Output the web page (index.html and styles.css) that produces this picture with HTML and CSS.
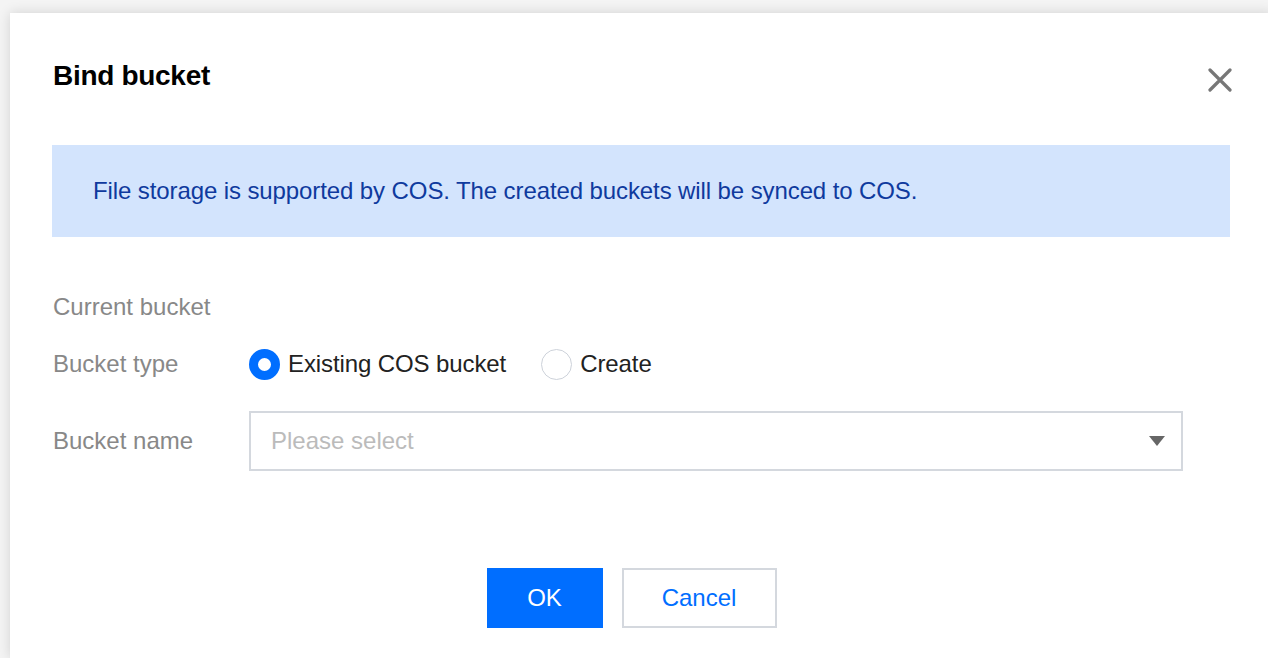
FILE: index.html
```html
<!DOCTYPE html>
<html lang="en">
<head>
<meta charset="utf-8">
<title>Bind bucket</title>
<link rel="stylesheet" href="styles.css">
</head>
<body>
  <div class="dialog">
    <div class="dialog-header">
      <h2 class="dialog-title">Bind bucket</h2>
      <button class="close-btn" aria-label="Close">
        <svg width="24" height="24" viewBox="0 0 24 24">
          <path d="M2 2 L22 22 M22 2 L2 22" stroke="#777" stroke-width="3.2" stroke-linecap="round" fill="none"/>
        </svg>
      </button>
    </div>

    <div class="alert">File storage is supported by COS. The created buckets will be synced to COS.</div>

    <div class="form">
      <div class="form-row row-current">
        <div class="form-label">Current bucket</div>
        <div class="form-control"></div>
      </div>
      <div class="form-row row-type">
        <div class="form-label">Bucket type</div>
        <div class="form-control radios">
          <label class="radio checked"><span class="radio-dot"></span><span class="radio-text">Existing COS bucket</span></label>
          <label class="radio"><span class="radio-dot"></span><span class="radio-text">Create</span></label>
        </div>
      </div>
      <div class="form-row row-name">
        <div class="form-label">Bucket name</div>
        <div class="form-control">
          <div class="select">
            <span class="placeholder">Please select</span>
            <span class="caret"></span>
          </div>
        </div>
      </div>
    </div>

    <div class="footer">
      <button class="btn btn-primary">OK</button>
      <button class="btn btn-weak">Cancel</button>
    </div>
  </div>
</body>
</html>
```

FILE: styles.css
```css
html, body {
  margin: 0;
  padding: 0;
}

body {
  background: #f4f4f4;
  font-family: "Liberation Sans", Arial, Helvetica, sans-serif;
  overflow: hidden;
  height: 658px;
}

.dialog {
  margin: 13px 0 0 10px;
  width: 1263px;
  height: 645px;
  box-sizing: border-box;
  background: #fff;
  box-shadow: 0 0 12px rgba(0, 0, 0, 0.14);
  padding: 43px 43px 0 42px;
}

.dialog-header {
  display: flex;
  align-items: center;
  justify-content: space-between;
  height: 40px;
}

.dialog-title {
  margin: 0 0 0 1px;
  font-size: 28px;
  font-weight: bold;
  color: #000;
  line-height: 40px;
  letter-spacing: -0.3px;
}

.close-btn {
  border: 0;
  background: none;
  padding: 0;
  margin: 8px -2px 0 0;
  width: 24px;
  height: 24px;
  display: block;
}

.close-btn svg {
  display: block;
}

.alert {
  margin-top: 49px;
  height: 92px;
  box-sizing: border-box;
  background: #d3e4fd;
  color: #0f3a9e;
  font-size: 24px;
  line-height: 92px;
  padding-left: 41px;
  letter-spacing: -0.1px;
}

.form {
  margin-top: 52px;
}

.form-row {
  display: flex;
  align-items: center;
}

.form-label {
  width: 197px;
  flex: none;
  padding-left: 1px;
  box-sizing: border-box;
  font-size: 24px;
  color: #888;
}

.form-control {
  flex: 1;
}

.row-current {
  height: 36px;
}

.row-type {
  margin-top: 21px;
  height: 36px;
}

.row-name {
  margin-top: 29px;
  height: 60px;
}

.radios {
  display: flex;
  align-items: center;
}

.radio {
  display: flex;
  align-items: center;
  margin-right: 35px;
  font-size: 24px;
  color: #222;
  letter-spacing: -0.1px;
}

.radio-dot {
  width: 31px;
  height: 31px;
  box-sizing: border-box;
  border-radius: 50%;
  border: 1.5px solid #cdd2da;
  background: #fff;
  margin-right: 8px;
}

.radio.checked .radio-dot {
  border: 9px solid #006eff;
}

.select {
  width: 934px;
  height: 60px;
  box-sizing: border-box;
  border: 2px solid #d4d8de;
  display: flex;
  align-items: center;
  justify-content: space-between;
  padding: 0 16px 0 20px;
}

.placeholder {
  font-size: 24px;
  color: #bbb;
}

.caret {
  width: 0;
  height: 0;
  border-left: 8px solid transparent;
  border-right: 8px solid transparent;
  border-top: 10px solid #666;
}

.footer {
  margin-top: 97px;
  display: flex;
  justify-content: center;
}

.btn {
  height: 60px;
  box-sizing: border-box;
  font-family: "Liberation Sans", Arial, Helvetica, sans-serif;
  font-size: 24px;
  margin-right: 19px;
  padding: 0;
  cursor: pointer;
}

.btn-primary {
  width: 116px;
  border: 0;
  background: #006eff;
  color: #fff;
}

.btn-weak {
  width: 155px;
  background: #fff;
  border: 2px solid #d4d8de;
  color: #006eff;
}
```
